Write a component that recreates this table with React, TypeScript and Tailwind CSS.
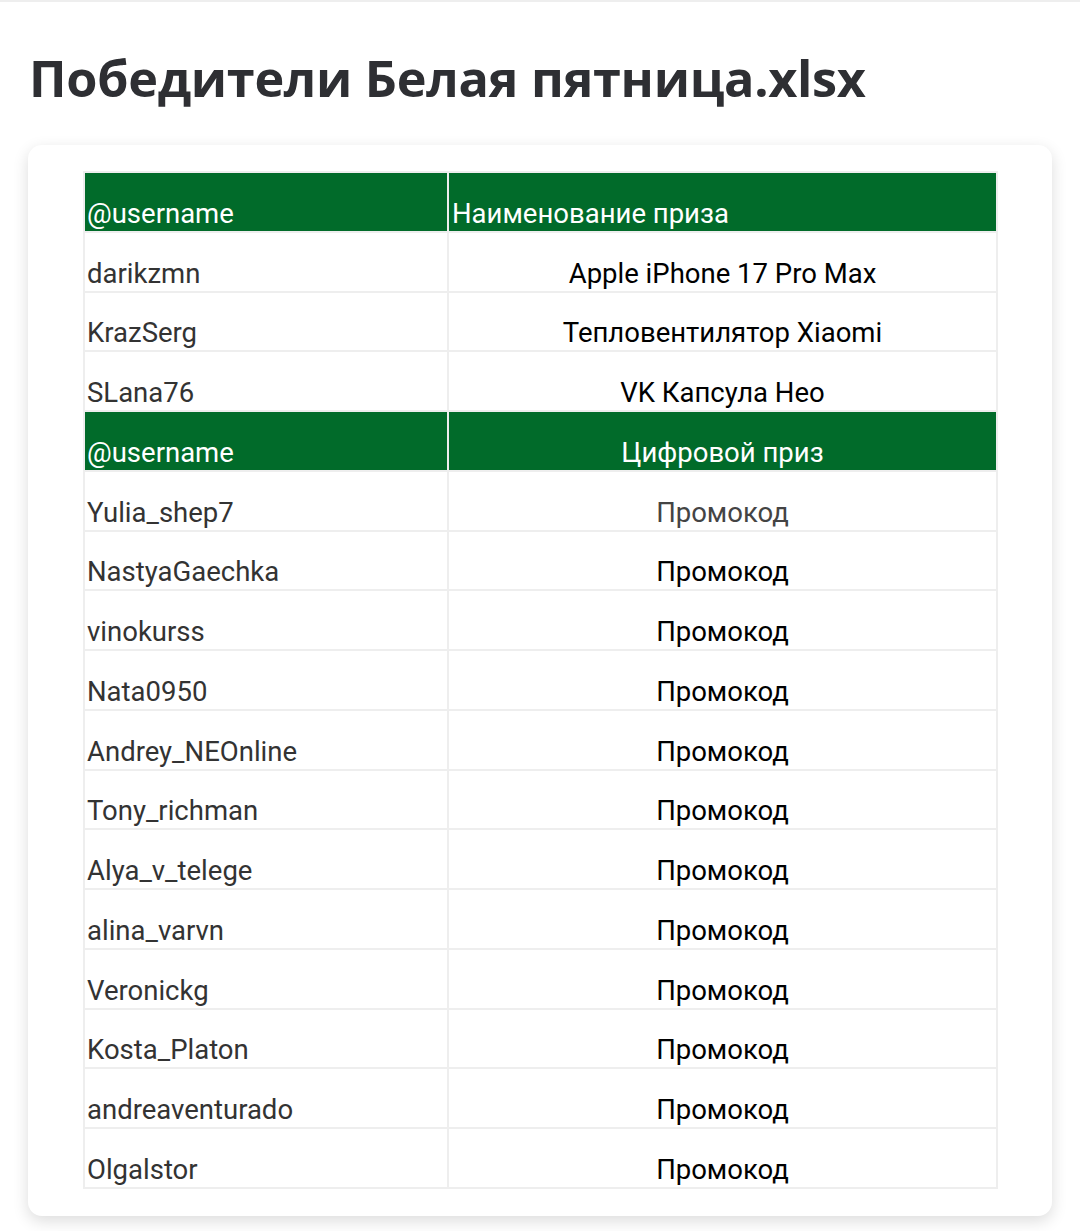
import React from "react";

const rows1 = [
  ["darikzmn", "Apple iPhone 17 Pro Max"],
  ["KrazSerg", "Тепловентилятор Xiaomi"],
  ["SLana76", "VK Капсула Нео"],
];
const rows2 = [
  "Yulia_shep7",
  "NastyaGaechka",
  "vinokurss",
  "Nata0950",
  "Andrey_NEOnline",
  "Tony_richman",
  "Alya_v_telege",
  "alina_varvn",
  "Veronickg",
  "Kosta_Platon",
  "andreaventurado",
  "Olgalstor",
];

function Header({ a, b, center }: { a: string; b: string; center?: boolean }) {
  return (
    <tr className="h-[59.75px] bg-[#016b2a] text-white">
      <td className="border-2 border-[#eeeeee] px-[2px] pb-[2px] align-bottom leading-[30px]">{a}</td>
      <td className={"border-2 border-[#eeeeee] px-[3px] pb-[2px] align-bottom leading-[30px] " + (center ? "text-center" : "text-left")}>{b}</td>
    </tr>
  );
}

function Row({ a, b, gray }: { a: string; b: string; gray?: boolean }) {
  return (
    <tr className="h-[59.75px]">
      <td className="border-2 border-[#eeeeee] px-[2px] pb-[2px] align-bottom leading-[30px] text-[#333333]">{a}</td>
      <td className={"border-2 border-[#eeeeee] px-[3px] pb-[2px] align-bottom leading-[30px] text-center " + (gray ? "text-[#444444]" : "text-black")}>{b}</td>
    </tr>
  );
}

export default function App() {
  return (
    <div className="min-h-[1231px] w-[1080px] bg-white border-t-2 border-[#eeeeee]">
      <div className="pt-[44px] pb-[35px] px-[29px]">
        <h1
          className="text-[50.4px] font-bold leading-[64px] text-[#2e2f33] tracking-[-0.3px]"
          style={{ fontFamily: '"Open Sans", "Noto Sans", sans-serif' }}
        >
          Победители Белая пятница.xlsx
        </h1>
      </div>
      <div className="mx-[28px] rounded-[14px] bg-white pt-[26px] pb-[27px] pl-[55px] pr-[54px] shadow-[0_5px_16px_rgba(0,0,0,0.14)]">
        <table
          className="w-full border-collapse text-[27.5px]"
          style={{ fontFamily: 'Roboto, "Noto Sans", sans-serif' }}
        >
          <colgroup>
            <col className="w-[364px]" />
            <col />
          </colgroup>
          <tbody>
            <Header a="@username" b="Наименование приза" />
            {rows1.map(([a, b]) => (
              <Row key={a} a={a} b={b} />
            ))}
            <Header a="@username" b="Цифровой приз" center />
            {rows2.map((a, i) => (
              <Row key={a} a={a} b="Промокод" gray={i === 0} />
            ))}
          </tbody>
        </table>
      </div>
    </div>
  );
}
